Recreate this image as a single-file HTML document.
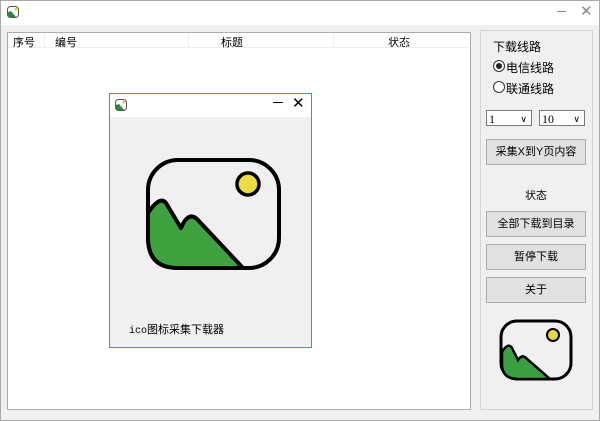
<!DOCTYPE html><html><head><meta charset="utf-8"><style>
body{margin:0;width:600px;height:421px;overflow:hidden;background:#f0f0f0;font-family:"Liberation Sans","Noto Sans CJK SC",sans-serif;font-size:11px;color:#000;position:relative}
.a{position:absolute}
.btn{position:absolute;left:486px;width:98px;height:24px;background:#e1e1e1;border:1px solid #adadad;text-align:center;line-height:24px}
.dd{position:absolute;top:110px;height:16px;background:#fff;border:1px solid #7a7a7a;font-family:"Liberation Serif",serif;font-size:12px;line-height:16px;padding-left:2px;box-sizing:border-box}
</style></head><body>
<div class="a" style="left:0;top:0;width:598px;height:419px;border:1px solid #aaa"></div>
<div class="a" style="left:1px;top:1px;width:598px;height:24px;background:#fff"></div>
<svg class="a" style="left:7px;top:6px" width="12" height="12"><rect x="0.5" y="0.5" width="11" height="11" rx="3" fill="#fff" stroke="#555"/><path d="M1 6 L4 5 L9 11 L1 11Z" fill="#2a8a3a"/><circle cx="9" cy="3" r="1.5" fill="#dc3"/></svg>
<div class="a" style="left:557px;top:11px;width:9px;height:1px;background:#888"></div>
<div class="a" style="left:580px;top:2px;color:#888;font-size:15px">✕</div>
<div class="a" style="left:7px;top:32px;width:462px;height:376px;background:#fff;border:1px solid #adadad"></div>
<div class="a" style="left:8px;top:33px;width:461px;height:14px;border-bottom:1px solid #eee"></div>
<div class="a" style="left:13px;top:34px">序号</div>
<div class="a" style="left:44px;top:33px;width:1px;height:14px;background:#f0f0f0"></div>
<div class="a" style="left:55px;top:34px">编号</div>
<div class="a" style="left:188px;top:33px;width:1px;height:14px;background:#f0f0f0"></div>
<div class="a" style="left:221px;top:34px">标题</div>
<div class="a" style="left:333px;top:33px;width:1px;height:14px;background:#f0f0f0"></div>
<div class="a" style="left:388px;top:34px">状态</div>
<div class="a" style="left:405px;top:33px;width:1px;height:14px;background:#f0f0f0"></div>
<div class="a" style="left:480px;top:30px;width:111px;height:378px;border:1px solid #d5d5d5"></div>
<div class="a" style="left:493px;top:38px;font-size:12px">下载线路</div>
<div class="a" style="left:493px;top:60px;width:10px;height:10px;border:1px solid #333;border-radius:50%;background:#fff"></div>
<div class="a" style="left:496px;top:63px;width:6px;height:6px;border-radius:50%;background:#222"></div>
<div class="a" style="left:506px;top:59px;font-size:12px">电信线路</div>
<div class="a" style="left:493px;top:81px;width:10px;height:10px;border:1px solid #333;border-radius:50%;background:#fff"></div>
<div class="a" style="left:506px;top:80px;font-size:12px">联通线路</div>
<div class="dd" style="left:486px;width:46px">1<span style="position:absolute;right:4px;font-size:9px">∨</span></div>
<div class="dd" style="left:539px;width:46px">10<span style="position:absolute;right:4px;font-size:9px">∨</span></div>
<div class="btn" style="top:139px">采集X到Y页内容</div>
<div class="a" style="left:525px;top:187px">状态</div>
<div class="btn" style="top:211px">全部下载到目录</div>
<div class="btn" style="top:244px">暂停下载</div>
<div class="btn" style="top:277px">关于</div>
<svg class="a" style="left:498px;top:318px" width="76" height="66"><rect x="3" y="3" width="70" height="58" rx="16" fill="#f0f0f0" stroke="#000" stroke-width="3"/><circle cx="55" cy="17" r="6" fill="#e7d93c" stroke="#000" stroke-width="2"/><path d="M4 34 Q10 24 14 30 L20 42 Q24 36 28 40 L52 61 L20 61 Q4 61 4 46Z" fill="#3aa040" stroke="#000" stroke-width="2.5"/></svg>
<div class="a" style="left:109px;top:93px;width:201px;height:253px;border:1px solid #3c8fd4;background:#f0f0f0"></div>
<div class="a" style="left:110px;top:94px;width:201px;height:23px;background:#fff"></div>
<svg class="a" style="left:115px;top:99px" width="12" height="12"><rect x="0.5" y="0.5" width="11" height="11" rx="3" fill="#fff" stroke="#555"/><path d="M1 6 L4 5 L9 11 L1 11Z" fill="#2a8a3a"/><circle cx="9" cy="3" r="1.5" fill="#dc3"/></svg>
<div class="a" style="left:273px;top:102px;width:10px;height:1px;background:#000"></div>
<div class="a" style="left:292px;top:94px;font-size:15px">✕</div>
<svg class="a" style="left:140px;top:155px" width="148" height="120"><rect x="8" y="5" width="131" height="108" rx="30" fill="#f0f0f0" stroke="#000" stroke-width="4"/><path d="M8 58 Q20 40 26 48 L41 73 Q48 56 57 64 L103 113 L38 113 Q8 113 8 83Z" fill="#3ea23e" stroke="#000" stroke-width="4" stroke-linejoin="round"/><circle cx="108" cy="29" r="11" fill="#ebdc40" stroke="#000" stroke-width="3.5"/></svg>
<div class="a" style="left:129px;top:321px"><span style="font-family:'Liberation Mono',monospace;font-size:10px">ico</span>图标采集下载器</div>
</body></html>
